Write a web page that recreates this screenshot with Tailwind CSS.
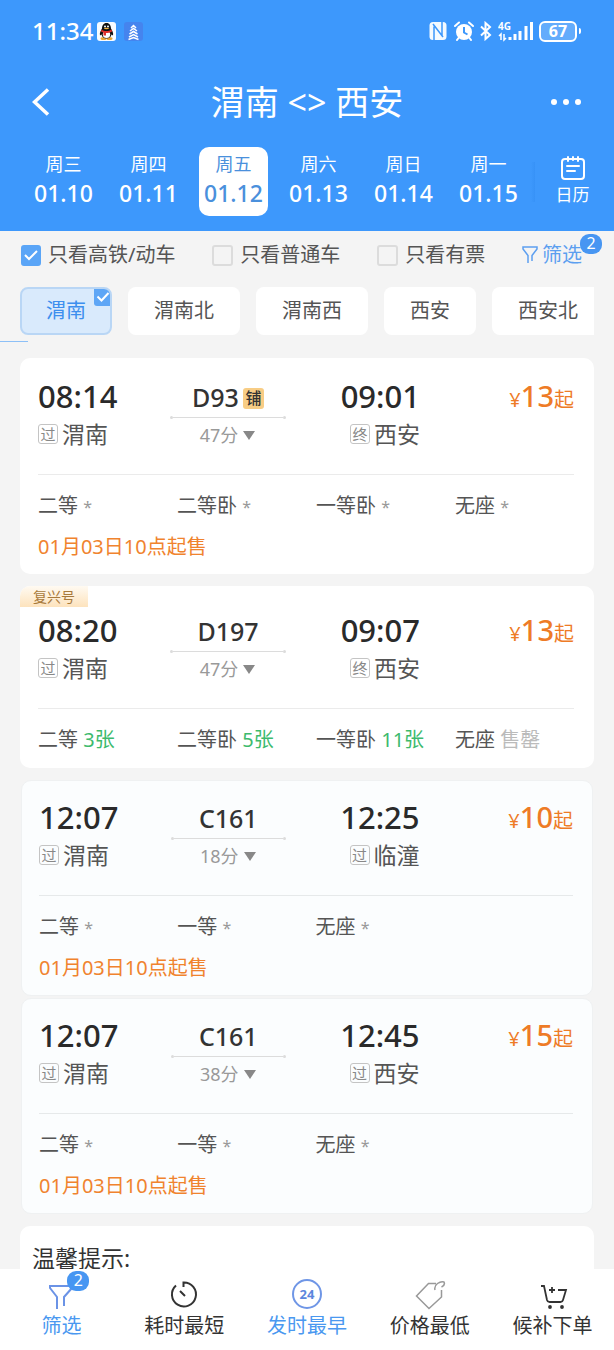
<!DOCTYPE html>
<html lang="zh-CN">
<head>
  <meta charset="UTF-8">
  <meta name="viewport" content="width=device-width, initial-scale=1.0">
  <title>渭南 - 西安 车票查询</title>
  <script src="https://cdn.jsdelivr.net/npm/@tailwindcss/browser@4"></script>
</head>
<body class="h-screen flex flex-col overflow-hidden bg-[#f4f4f4] font-['Noto_Sans','Noto_Sans_CJK_SC',sans-serif] text-[20px] text-[#555]">

  <header class="shrink-0 bg-[#3d98fc] text-white pb-[15px]">
    <!-- status bar -->
    <div class="flex items-center justify-between h-[62px] pl-8 pr-[33px]">
      <div class="flex items-center">
        <span class="text-[24px] font-medium leading-8">11:34</span>
        <svg class="w-[19px] h-[19px] ml-1" viewBox="0 0 19 19">
          <rect width="19" height="19" rx="3" fill="#f8fbff"/>
          <ellipse cx="6.5" cy="16.5" rx="3" ry="1.5" fill="#e9a534"/>
          <ellipse cx="12.5" cy="16.5" rx="3" ry="1.5" fill="#e9a534"/>
          <path d="M9.500 1C6.500 1 5 3.500 5 6.500 4 8.500 2.300 10.500 3 13.500l1.500-1c.5 2.500 2.500 4 5 4s4.500-1.500 5-4l1.500 1c.7-3-1-5-2-7C14 3.500 12.500 1 9.500 1z" fill="#111"/>
          <ellipse cx="9.500" cy="12.500" rx="3.700" ry="3.500" fill="#fff"/>
          <circle cx="8" cy="4.500" r="1" fill="#fff"/><circle cx="11" cy="4.500" r="1" fill="#fff"/>
          <ellipse cx="9.500" cy="6.500" rx="2.500" ry=".8" fill="#f2b23a"/>
          <path d="M4.500 7.500c3 2 7 2 10 0l.5 2c-2 1.200-4 1.500-6 1.500v2.500H6.500v-3L4 9.500z" fill="#e0302b"/>
        </svg>
        <svg class="w-[19px] h-[19px] ml-2" viewBox="0 0 19 19" fill="none" stroke="#fff" stroke-width="1.500">
          <rect width="19" height="19" rx="3" fill="#4584ee" stroke="none"/>
          <path d="M7 6l2.500-2.500L12 6M6 9l3.500-2.500L13 9M5.500 12l4-2.500 4 2.500M5 15l4.500-2.500L14 15M4.500 17.500l5-2 5 2"/>
        </svg>
      </div>
      <div class="flex items-center">
        <svg class="w-[18px] h-5" viewBox="0 0 18 20">
          <rect x="0.5" y="1" width="17" height="18" rx="3.500" fill="#f4faff"/>
          <path d="M5 19V5.500M13 1v13.500M4 3l10 13" fill="none" stroke="#3d98fc" stroke-width="1.500"/>
        </svg>
        <svg class="w-5 h-5 ml-[7px]" viewBox="0 0 20 20">
          <circle cx="10" cy="11" r="8" fill="#fff"/>
          <path d="M1 5l4-3.500M19 5l-4-3.500M4.500 17L3 19M15.500 17l1.500 2" stroke="#fff" stroke-width="2" stroke-linecap="round"/>
          <path d="M10 6v5.500l3.500 2" fill="none" stroke="#3d98fc" stroke-width="2"/>
        </svg>
        <svg class="w-3 h-5 ml-1.5" viewBox="0 0 12 20" fill="none" stroke="#fff" stroke-width="2">
          <path d="M1 5.500l9 8.500-4.500 4V2L10 6l-9 8.500"/>
        </svg>
        <svg class="w-9 h-[22px] ml-1.5" viewBox="0 0 36 22">
          <text x="0" y="10" font-size="10" font-weight="700" fill="#fff">4G</text>
          <path d="M3 20v-6L1 16M6 14v6l2-2" fill="none" stroke="#fff" stroke-width="1.500"/>
          <path d="M12 20v-3M17 20v-6M22 20v-9M28 20V6M33.500 20V2" stroke="#fff" stroke-width="3"/>
        </svg>
        <div class="ml-[5px] w-[38px] h-[21px] rounded-md border-2 border-white bg-white/20 flex items-center justify-center text-[16px] leading-4 font-bold">67</div>
        <span class="ml-0.5 w-0.5 h-1.5 bg-white rounded-r"></span>
      </div>
    </div>

    <div class="grid grid-cols-[1fr_auto_1fr] items-center h-20 px-8">
      <button type="button" aria-label="返回" class="justify-self-start">
        <svg class="w-[18px] h-7" viewBox="0 0 18 28" fill="none" stroke="#fff" stroke-width="3.500"><path d="M16 1.500L2.500 14 16 26.500"/></svg>
      </button>
      <h1 class="text-[34px] leading-[48px]">渭南 &lt;&gt; 西安</h1>
      <button type="button" aria-label="更多" class="justify-self-end">
        <svg class="w-8 h-2" viewBox="0 0 32 8" fill="#fff"><circle cx="4" cy="4" r="3"/><circle cx="16" cy="4" r="3"/><circle cx="28" cy="4" r="3"/></svg>
      </button>
    </div>

    <!-- dates -->
    <div class="flex items-center mt-[5px] pl-[21px]">
      <div class="grid grid-cols-6 flex-1 text-[18px] leading-[29px]">
        <button type="button" class="h-[69px] mx-2 pb-1.5 rounded-[10px]">周三<b class="block text-[23px] font-medium">01.10</b></button>
        <button type="button" class="h-[69px] mx-2 pb-1.5 rounded-[10px]">周四<b class="block text-[23px] font-medium">01.11</b></button>
        <button type="button" class="h-[69px] mx-2 pb-1.5 rounded-[10px] bg-white text-[#4a90dc]">周五<b class="block text-[23px] font-medium">01.12</b></button>
        <button type="button" class="h-[69px] mx-2 pb-1.5 rounded-[10px]">周六<b class="block text-[23px] font-medium">01.13</b></button>
        <button type="button" class="h-[69px] mx-2 pb-1.5 rounded-[10px]">周日<b class="block text-[23px] font-medium">01.14</b></button>
        <button type="button" class="h-[69px] mx-2 pb-1.5 rounded-[10px]">周一<b class="block text-[23px] font-medium">01.15</b></button>
      </div>
      <div class="flex items-center pr-1">
        <span class="w-1 h-10 bg-linear-to-l from-[#3792f7] to-[#3d98fc]"></span>
        <button type="button" class="w-[75px] flex flex-col items-center gap-0.5 text-[17px] leading-6">
          <svg class="w-6 h-[25px]" viewBox="0 0 24 25" fill="none" stroke="#fff" stroke-width="2" stroke-linecap="round">
            <rect x="1" y="3" width="22" height="20" rx="3"/><path d="M7 1v4M17 1v4M12 1v3M6 10h12M6 15h8"/>
          </svg>
          日历
        </button>
      </div>
    </div>
  </header>

  <main class="flex-1 min-h-0 overflow-hidden">
    <!-- quick filters -->
    <div class="flex items-center justify-between h-12 pl-[21px] pr-3">
      <label class="relative flex items-center gap-[7px]">
        <input type="checkbox" checked class="peer appearance-none w-5 h-[21px] rounded-[3px] border-2 border-[#dcdcdc] checked:border-[#5aa5f7] checked:bg-[#5aa5f7]">
        <svg class="absolute left-[3px] w-3.5 h-3 hidden peer-checked:block" viewBox="0 0 14 12" fill="none" stroke="#fff" stroke-width="2"><path d="M1 6l4 4 8-8"/></svg>
        只看高铁/动车
      </label>
      <label class="flex items-center gap-[7px] ml-4">
        <input type="checkbox" class="appearance-none w-[21px] h-[21px] rounded-[3px] border-2 border-[#dcdcdc] checked:bg-[#5aa5f7]">
        只看普通车
      </label>
      <label class="flex items-center gap-[7px] ml-4">
        <input type="checkbox" class="appearance-none w-[21px] h-[21px] rounded-[3px] border-2 border-[#dcdcdc] checked:bg-[#5aa5f7]">
        只看有票
      </label>
      <button type="button" class="relative flex items-center gap-1 pr-5 ml-4 text-[#5c9ff0]">
        <svg class="w-4 h-[18px]" viewBox="0 0 16 18" fill="none" stroke="#5c9ff0" stroke-width="1.500"><path d="M6 17V9.500L1 3V1h14v2l-5 6.500V15"/></svg>
        筛选
        <span class="absolute right-0 -top-1.5 w-[22px] h-5 rounded-[9px] bg-[#4796f2] text-white text-[16px] leading-[18px] text-center">2</span>
      </button>
    </div>

    <!-- stations -->
    <div class="flex gap-4 mx-5 mt-2 overflow-hidden">
      <button type="button" class="relative shrink-0 h-12 px-6 rounded-lg border-2 border-[#b9d6f5] bg-[#d9eafc] text-[#3d8fee] overflow-hidden">
        渭南
        <svg class="absolute right-0 top-0 w-4 h-[17px]" viewBox="0 0 16 17" fill="none"><path d="M0 0h16v17H3q-3 0-3-3z" fill="#5ea6f6"/><path d="M3.500 7.500l4 4 7-7.500" stroke="#fff" stroke-width="2"/></svg>
      </button>
      <button type="button" class="shrink-0 h-12 px-[26px] rounded-lg bg-white">渭南北</button>
      <button type="button" class="shrink-0 h-12 px-[26px] rounded-lg bg-white">渭南西</button>
      <button type="button" class="shrink-0 h-12 px-[26px] rounded-lg bg-white">西安</button>
      <button type="button" class="shrink-0 h-12 px-[26px] rounded-lg bg-white">西安北</button>
    </div>
    <div class="w-7 h-px mt-1.5 bg-[#8dc0f7]"></div>

    <!-- D93 -->
    <section class="mx-5 mt-4 pt-[18px] pb-[7px] pl-[18px] rounded-[10px] bg-white">
      <div class="grid grid-cols-[132fr_116fr_134fr_154fr] pr-5">
        <div>
          <div class="text-[31px] leading-10 font-medium text-[#2a2a2a]">08:14</div>
          <div class="flex items-center gap-1 h-9 text-[23px]"><i class="not-italic w-5 h-5 rounded-[3px] border border-[#c4c4c4] text-[15px] leading-[18px] text-center text-[#888]">过</i>渭南</div>
        </div>
        <div>
          <div class="flex items-center justify-center gap-1 h-10 pt-1 text-[25px] text-[#333] font-medium">D93 <i class="not-italic w-[21px] h-[21px] rounded-[3px] bg-[#f8cd85] text-[16px] leading-5 text-center">铺</i></div>
          <div class="flex items-center h-[3px]"><i class="w-[3px] h-[3px] rounded-full bg-[#dcdcdc]"></i><i class="flex-1 h-px bg-[#dcdcdc]"></i><i class="w-[3px] h-[3px] rounded-full bg-[#dcdcdc]"></i></div>
          <div class="flex items-center justify-center gap-1 h-8 text-[18px] text-[#999]">47分 <svg class="w-3.5 h-[9px]" viewBox="0 0 14 9"><path d="M1 0h12L7 9z" fill="#888"/></svg></div>
        </div>
        <div class="flex flex-col items-end">
          <div class="text-[31px] leading-10 font-medium text-[#2a2a2a]">09:01</div>
          <div class="flex items-center gap-1 h-9 text-[23px]"><i class="not-italic w-5 h-5 rounded-[3px] border border-[#c4c4c4] text-[15px] leading-[18px] text-center text-[#888]">终</i>西安</div>
        </div>
        <div class="text-right text-[20px] leading-10 text-[#ee7b26]">¥<b class="text-[29px] font-medium">13</b>起</div>
      </div>
      <hr class="mt-[22px] mr-5 border-[#ebebeb]">
      <div class="grid grid-cols-4 mt-[11px] leading-10">
        <div>二等 <span class="text-[16px] text-[#999]">*</span></div>
        <div>二等卧 <span class="text-[16px] text-[#999]">*</span></div>
        <div>一等卧 <span class="text-[16px] text-[#999]">*</span></div>
        <div>无座 <span class="text-[16px] text-[#999]">*</span></div>
      </div>
      <p class="leading-10 text-[#f0832e]">01月03日10点起售</p>
    </section>

    <!-- D197 -->
    <section class="relative mx-5 mt-3 pt-6 pb-2 pl-[18px] rounded-[10px] bg-white">
      <span class="absolute left-0 top-0 w-[68px] h-[21px] rounded-tl-[10px] bg-linear-to-b from-[#fffaf2] to-[#fde3bd] text-[14px] leading-[21px] text-center text-[#a87a3c]">复兴号</span>
      <div class="grid grid-cols-[132fr_116fr_134fr_154fr] pr-5">
        <div>
          <div class="text-[31px] leading-10 font-medium text-[#2a2a2a]">08:20</div>
          <div class="flex items-center gap-1 h-9 text-[23px]"><i class="not-italic w-5 h-5 rounded-[3px] border border-[#c4c4c4] text-[15px] leading-[18px] text-center text-[#888]">过</i>渭南</div>
        </div>
        <div>
          <div class="flex items-center justify-center h-10 pt-1 text-[25px] text-[#333] font-medium">D197</div>
          <div class="flex items-center h-[3px]"><i class="w-[3px] h-[3px] rounded-full bg-[#dcdcdc]"></i><i class="flex-1 h-px bg-[#dcdcdc]"></i><i class="w-[3px] h-[3px] rounded-full bg-[#dcdcdc]"></i></div>
          <div class="flex items-center justify-center gap-1 h-8 text-[18px] text-[#999]">47分 <svg class="w-3.5 h-[9px]" viewBox="0 0 14 9"><path d="M1 0h12L7 9z" fill="#888"/></svg></div>
        </div>
        <div class="flex flex-col items-end">
          <div class="text-[31px] leading-10 font-medium text-[#2a2a2a]">09:07</div>
          <div class="flex items-center gap-1 h-9 text-[23px]"><i class="not-italic w-5 h-5 rounded-[3px] border border-[#c4c4c4] text-[15px] leading-[18px] text-center text-[#888]">终</i>西安</div>
        </div>
        <div class="text-right text-[20px] leading-10 text-[#ee7b26]">¥<b class="text-[29px] font-medium">13</b>起</div>
      </div>
      <hr class="mt-[22px] mr-5 border-[#ebebeb]">
      <div class="grid grid-cols-4 mt-[11px] leading-10">
        <div>二等 <span class="text-[#3dba6d]">3张</span></div>
        <div>二等卧 <span class="text-[#3dba6d]">5张</span></div>
        <div>一等卧 <span class="text-[#3dba6d]">11张</span></div>
        <div>无座 <span class="text-[#bbb]">售罄</span></div>
      </div>
    </section>

    <!-- C161 临潼 -->
    <section class="mx-[21px] mt-3 pt-4 pb-[7px] pl-[17px] rounded-[10px] border border-[#eff1f2] bg-[#fbfdfe]">
      <div class="grid grid-cols-[132fr_116fr_134fr_154fr] pr-[19px]">
        <div>
          <div class="text-[31px] leading-10 font-medium text-[#2a2a2a]">12:07</div>
          <div class="flex items-center gap-1 h-9 text-[23px]"><i class="not-italic w-5 h-5 rounded-[3px] border border-[#c4c4c4] text-[15px] leading-[18px] text-center text-[#888]">过</i>渭南</div>
        </div>
        <div>
          <div class="flex items-center justify-center h-10 pt-1 text-[25px] text-[#333] font-medium">C161</div>
          <div class="flex items-center h-[3px]"><i class="w-[3px] h-[3px] rounded-full bg-[#dcdcdc]"></i><i class="flex-1 h-px bg-[#dcdcdc]"></i><i class="w-[3px] h-[3px] rounded-full bg-[#dcdcdc]"></i></div>
          <div class="flex items-center justify-center gap-1 h-8 text-[18px] text-[#999]">18分 <svg class="w-3.5 h-[9px]" viewBox="0 0 14 9"><path d="M1 0h12L7 9z" fill="#888"/></svg></div>
        </div>
        <div class="flex flex-col items-end">
          <div class="text-[31px] leading-10 font-medium text-[#2a2a2a]">12:25</div>
          <div class="flex items-center gap-1 h-9 text-[23px]"><i class="not-italic w-5 h-5 rounded-[3px] border border-[#c4c4c4] text-[15px] leading-[18px] text-center text-[#888]">过</i>临潼</div>
        </div>
        <div class="text-right text-[20px] leading-10 text-[#ee7b26]">¥<b class="text-[29px] font-medium">10</b>起</div>
      </div>
      <hr class="mt-[22px] mr-[19px] border-[#e6e9ea]">
      <div class="grid grid-cols-4 mt-[11px] leading-10">
        <div>二等 <span class="text-[16px] text-[#999]">*</span></div>
        <div>一等 <span class="text-[16px] text-[#999]">*</span></div>
        <div>无座 <span class="text-[16px] text-[#999]">*</span></div>
      </div>
      <p class="leading-10 text-[#f0832e]">01月03日10点起售</p>
    </section>

    <!-- C161 西安 -->
    <section class="mx-[21px] mt-0.5 pt-4 pb-[7px] pl-[17px] rounded-[10px] border border-[#eff1f2] bg-[#fbfdfe]">
      <div class="grid grid-cols-[132fr_116fr_134fr_154fr] pr-[19px]">
        <div>
          <div class="text-[31px] leading-10 font-medium text-[#2a2a2a]">12:07</div>
          <div class="flex items-center gap-1 h-9 text-[23px]"><i class="not-italic w-5 h-5 rounded-[3px] border border-[#c4c4c4] text-[15px] leading-[18px] text-center text-[#888]">过</i>渭南</div>
        </div>
        <div>
          <div class="flex items-center justify-center h-10 pt-1 text-[25px] text-[#333] font-medium">C161</div>
          <div class="flex items-center h-[3px]"><i class="w-[3px] h-[3px] rounded-full bg-[#dcdcdc]"></i><i class="flex-1 h-px bg-[#dcdcdc]"></i><i class="w-[3px] h-[3px] rounded-full bg-[#dcdcdc]"></i></div>
          <div class="flex items-center justify-center gap-1 h-8 text-[18px] text-[#999]">38分 <svg class="w-3.5 h-[9px]" viewBox="0 0 14 9"><path d="M1 0h12L7 9z" fill="#888"/></svg></div>
        </div>
        <div class="flex flex-col items-end">
          <div class="text-[31px] leading-10 font-medium text-[#2a2a2a]">12:45</div>
          <div class="flex items-center gap-1 h-9 text-[23px]"><i class="not-italic w-5 h-5 rounded-[3px] border border-[#c4c4c4] text-[15px] leading-[18px] text-center text-[#888]">过</i>西安</div>
        </div>
        <div class="text-right text-[20px] leading-10 text-[#ee7b26]">¥<b class="text-[29px] font-medium">15</b>起</div>
      </div>
      <hr class="mt-[22px] mr-[19px] border-[#e6e9ea]">
      <div class="grid grid-cols-4 mt-[11px] leading-10">
        <div>二等 <span class="text-[16px] text-[#999]">*</span></div>
        <div>一等 <span class="text-[16px] text-[#999]">*</span></div>
        <div>无座 <span class="text-[16px] text-[#999]">*</span></div>
      </div>
      <p class="leading-10 text-[#f0832e]">01月03日10点起售</p>
    </section>

    <section class="mx-5 mt-3 px-3 pt-4 pb-6 rounded-[10px] bg-white text-[23px] leading-8 text-[#333]">温馨提示:</section>
  </main>

  <nav class="shrink-0 grid grid-cols-5 h-[81px] pt-2.5 bg-white leading-[30px] text-[#333]">
    <button type="button" class="relative flex flex-col items-center text-[#4a98f0]">
      <svg class="w-8 h-8" viewBox="0 0 32 32" fill="none" stroke="#6b93e6" stroke-width="2"><path d="M12 30V18L5 9V7h22v2l-8 9v9"/></svg>
      筛选
      <span class="absolute left-1/2 ml-1.5 -top-2 w-[22px] h-5 rounded-[9px] bg-[#4796f2] text-white text-[16px] leading-[18px] text-center">2</span>
    </button>
    <button type="button" class="flex flex-col items-center">
      <svg class="w-8 h-8" viewBox="0 0 32 32" fill="none" stroke="#333" stroke-width="2"><path d="M15.500 8V3.500A12 12 0 1 1 8 6.500M12 12l5 5"/></svg>
      耗时最短
    </button>
    <button type="button" class="flex flex-col items-center text-[#4a98f0]">
      <svg class="w-8 h-8" viewBox="0 0 32 32"><circle cx="16" cy="15" r="14" fill="none" stroke="#6f96e6" stroke-width="2"/><text x="16" y="20" font-size="13" font-weight="700" text-anchor="middle" fill="#5c86dd">24</text></svg>
      发时最早
    </button>
    <button type="button" class="flex flex-col items-center">
      <svg class="w-8 h-8" viewBox="0 0 32 32" fill="none" stroke="#999" stroke-width="1.500"><path d="M22 4.500h-7.500L2.500 17 15 29.500 27.500 18v-7M21 11q-1-4 2.500-6.500T30 3q1.500 3-2.500 5"/></svg>
      价格最低
    </button>
    <button type="button" class="flex flex-col items-center">
      <svg class="w-8 h-8" viewBox="0 0 32 32" fill="none" stroke="#333" stroke-width="1.800"><path d="M4 7h3l3 14q.5 2 2.500 2h11q2 0 2.500-2l3-10h-8M15 8v6M12 11h6"/><circle cx="13" cy="28" r="1" fill="#333"/><circle cx="25" cy="28" r="1" fill="#333"/></svg>
      候补下单
    </button>
  </nav>
</body>
</html>
